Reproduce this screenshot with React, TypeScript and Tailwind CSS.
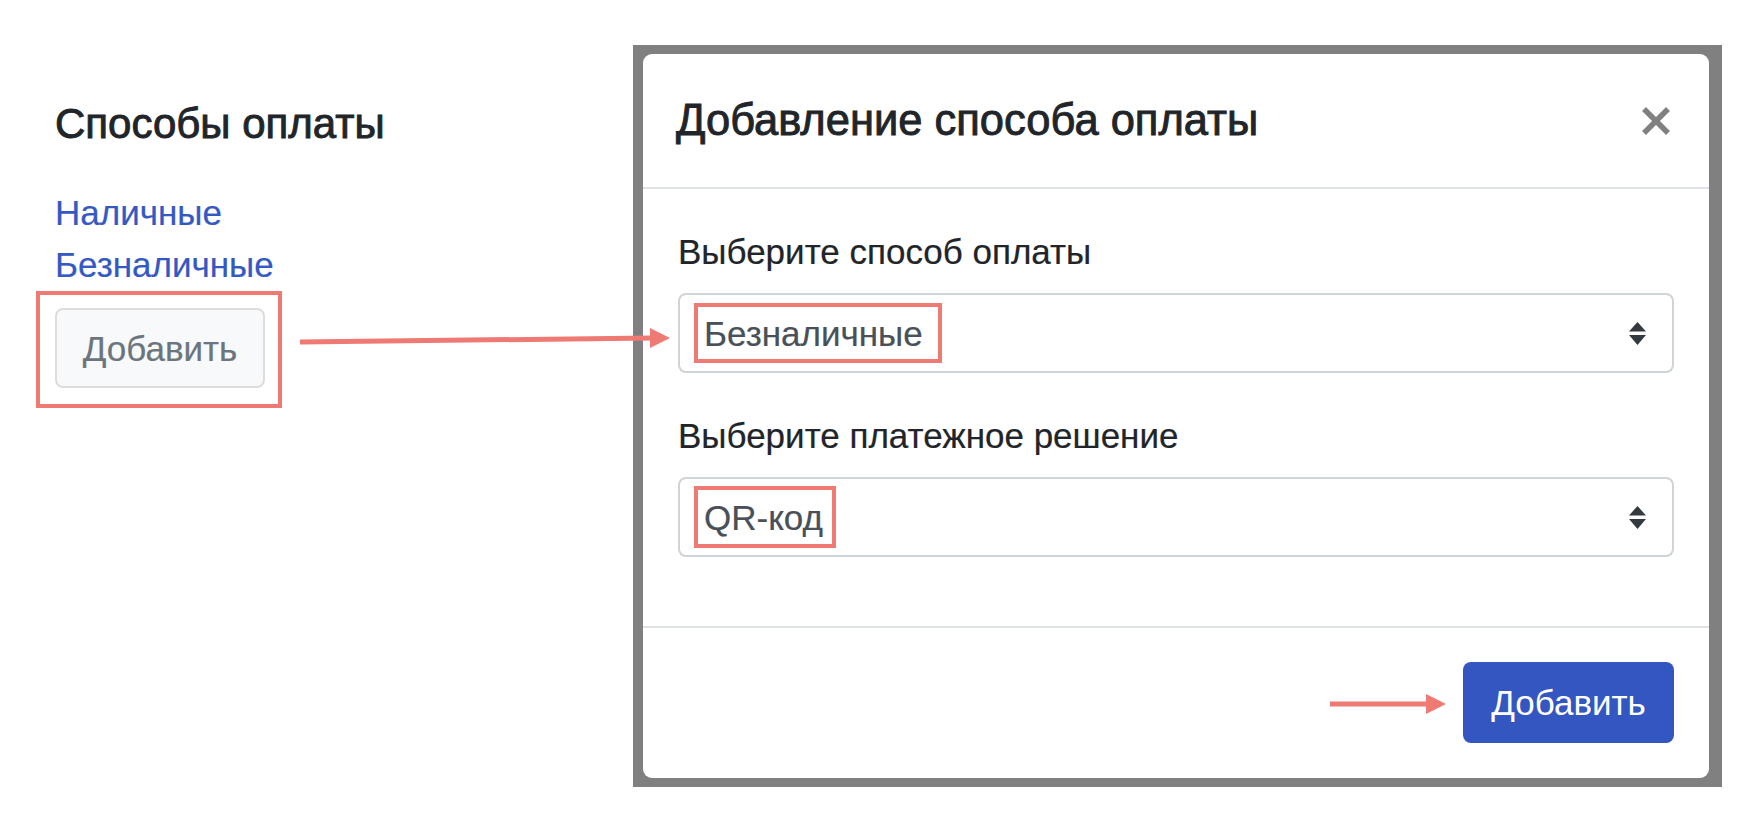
import React from "react";

function SelectArrows() {
  return (
    <svg width="17" height="23" viewBox="0 0 17 23" className="shrink-0">
      <polygon points="8.5,0 17,9.5 0,9.5" fill="#343a40" />
      <polygon points="0,13 17,13 8.5,23" fill="#343a40" />
    </svg>
  );
}

function CloseIcon() {
  return (
    <svg width="28" height="28" viewBox="0 0 28 28" className="shrink-0">
      <line x1="2" y1="2" x2="26" y2="26" stroke="#808080" strokeWidth="5.5" />
      <line x1="26" y1="2" x2="2" y2="26" stroke="#808080" strokeWidth="5.5" />
    </svg>
  );
}

export default function App() {
  return (
    <div className="relative w-[1746px] h-[822px] bg-white overflow-hidden flex items-start pt-[45px] font-['Liberation_Sans',Arial,sans-serif]">
      {/* Left column */}
      <div className="w-[633px] shrink-0 pl-[55px] pt-[54px] flex flex-col items-start">
        <h2 className="m-0 text-[42px] leading-[50px] text-[#212529] font-normal [-webkit-text-stroke:0.9px_#212529] mb-[38px]">
          Способы оплаты
        </h2>
        <a className="text-[35px] leading-[52px] text-[#3559c2] cursor-pointer [-webkit-text-stroke:0.2px_#3559c2]">Наличные</a>
        <a className="text-[35px] leading-[52px] text-[#3559c2] cursor-pointer [-webkit-text-stroke:0.2px_#3559c2]">Безналичные</a>
        <div className="-ml-[19px] border-4 border-[#ee7a73] pt-[13px] pb-[16px] pl-[15px] pr-[13px]">
          <button className="w-[210px] h-[80px] border-2 border-[#dddddd] bg-[#f8f9fa] rounded-[8px] text-[35px] leading-[51px] text-[#6c757d] flex items-center justify-center [-webkit-text-stroke:0.2px_#6c757d]">
            Добавить
          </button>
        </div>
      </div>

      {/* Modal frame */}
      <div className="w-[1089px] shrink-0 bg-[#808080] pt-[9px] pb-[9px] pl-[10px] pr-[13px]">
        <div className="bg-white rounded-[9px] flex flex-col">
          {/* Header */}
          <div className="h-[135px] flex items-center justify-between pl-[33px] pr-[39px] border-b-2 border-[#dee2e6]">
            <h5 className="m-0 text-[43.5px] leading-[63px] text-[#212529] font-normal [-webkit-text-stroke:0.9px_#212529]">
              Добавление способа оплаты
            </h5>
            <CloseIcon />
          </div>

          {/* Body */}
          <div className="pt-[37px] px-[35px] pb-[69px] flex flex-col">
            <label className="text-[35px] leading-[51px] text-[#212529] mb-[16px] [-webkit-text-stroke:0.2px_#212529]">
              Выберите способ оплаты
            </label>
            <div className="h-[80px] border-2 border-[#ced4da] rounded-[8px] flex items-center justify-between pl-[14px] pr-[26px]">
              <span className="h-[60px] border-4 border-[#ee7a73] pl-[6px] pr-[15px] flex items-center text-[35px] leading-[51px] text-[#495057] [-webkit-text-stroke:0.2px_#495057]">
                Безналичные
              </span>
              <SelectArrows />
            </div>

            <label className="mt-[37px] text-[35px] leading-[51px] text-[#212529] mb-[16px] [-webkit-text-stroke:0.2px_#212529]">
              Выберите платежное решение
            </label>
            <div className="h-[80px] border-2 border-[#ced4da] rounded-[8px] flex items-center justify-between pl-[14px] pr-[26px]">
              <span className="h-[62px] border-4 border-[#ee7a73] pl-[6px] pr-[9px] flex items-center text-[35px] leading-[51px] text-[#495057] [-webkit-text-stroke:0.2px_#495057]">
                QR-код
              </span>
              <SelectArrows />
            </div>
          </div>

          {/* Footer */}
          <div className="border-t-2 border-[#dee2e6] pt-[34px] pb-[35px] pr-[35px] flex justify-end">
            <button className="w-[211px] h-[81px] bg-[#3356c1] rounded-[8px] text-white text-[35px] leading-[51px] flex items-center justify-center">
              Добавить
            </button>
          </div>
        </div>
      </div>

      {/* Annotation arrows */}
      <svg
        className="absolute left-0 top-0 pointer-events-none"
        width="1746"
        height="822"
        viewBox="0 0 1746 822"
      >
        <line x1="300" y1="342" x2="652" y2="338" stroke="#ee7a73" strokeWidth="5" />
        <polygon points="650,328 670,338 650,348" fill="#ee7a73" />
        <line x1="1330" y1="704" x2="1428" y2="704" stroke="#ee7a73" strokeWidth="5" />
        <polygon points="1426,694 1446,704 1426,714" fill="#ee7a73" />
      </svg>
    </div>
  );
}
